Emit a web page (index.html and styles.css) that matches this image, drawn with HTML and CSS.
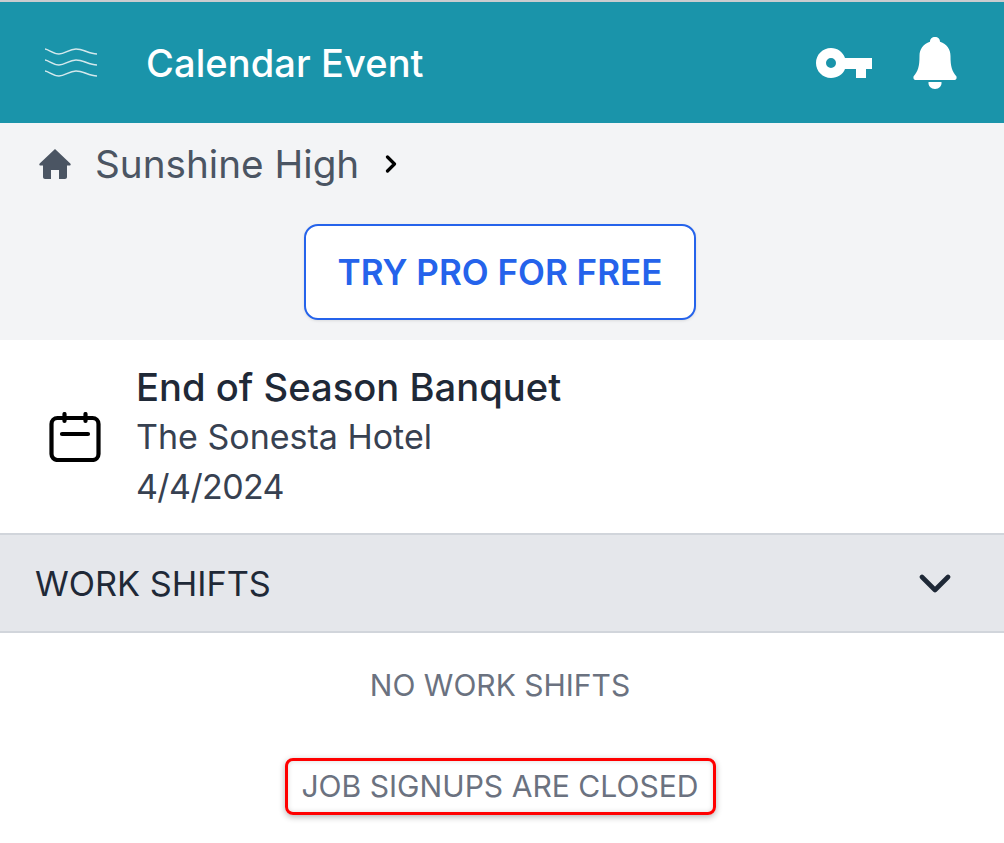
FILE: index.html
```html
<!DOCTYPE html>
<html lang="en">
<head>
<meta charset="utf-8">
<title>Calendar Event</title>
<link rel="stylesheet" href="styles.css">
</head>
<body>
<header class="topbar">
  <svg class="waves" viewBox="0 0 52 30" fill="none" stroke="#d3e8ec" stroke-width="1.600" stroke-linecap="round" aria-hidden="true">
    <path d="M0 1C4 1.500 8 6 14 6S24 1 31 1s13 5 21 5"/>
    <path d="M0 12c4 .5 8 5 14 5s10-5 17-5 13 5 21 5"/>
    <path d="M0 23c4 .5 8 5 14 5s10-5 17-5 13 5 21 5"/>
  </svg>
  <h1 class="title">Calendar Event</h1>
  <svg class="key" viewBox="0 0 56 30" aria-hidden="true">
    <path fill="#fff" fill-rule="evenodd" d="M15 0c6.500 0 12 4 14 10h27v11h-6v9H40v-9H29c-2 5.500-7.500 9-14 9C6.700 30 0 23.300 0 15S6.700 0 15 0zm0 10a5 5 0 1 0 0 10 5 5 0 0 0 0-10z"/>
  </svg>
  <svg class="bell" viewBox="0 0 44 52" aria-hidden="true">
    <path fill="#fff" d="M22 0c3 0 5 2 5 4.800C34 6.800 37.500 12.500 37.500 19c0 11 1.500 15 6 20.500.5 2-.5 3.500-2 3.500H2.500c-1.500 0-2.500-1.500-2-3.500C5 34 6.500 30 6.500 19 6.500 12.500 10 6.800 17 4.800 17 2 19 0 22 0z"/>
    <path fill="#fff" d="M15.500 45h13c.5 4-2.500 7-6.500 7s-7-3-6.500-7z"/>
  </svg>
</header>

<section class="subbar">
  <nav class="crumbs">
    <svg class="home" viewBox="0 0 32 30" aria-hidden="true">
      <path fill="#4b5563" d="M16 0l15.300 14.500c.8.800.3 2-.8 2H28v11.500c0 1.100-.9 2-2 2h-6v-9h-8v9H6c-1.100 0-2-.9-2-2V16.500H1.500c-1.100 0-1.600-1.200-.8-2z"/>
    </svg>
    <span class="crumb-text">Sunshine High</span>
    <svg class="crumb-arrow" viewBox="0 0 12 18" fill="none" stroke="#000" stroke-width="3.200" stroke-linecap="round" stroke-linejoin="round" aria-hidden="true">
      <path d="M2.500 2l7 7-7 7"/>
    </svg>
  </nav>
  <div class="cta-row">
    <button class="cta" type="button">TRY PRO FOR FREE</button>
  </div>
</section>

<section class="event">
  <svg class="cal" viewBox="0 0 52 50" fill="none" stroke="#000" stroke-width="4.200" stroke-linecap="round" stroke-linejoin="round" aria-hidden="true">
    <rect x="2.500" y="6" width="47" height="42" rx="6"/>
    <path d="M15.500 2v7M36.500 2v7M13 22h26"/>
  </svg>
  <div class="event-info">
    <div class="event-name">End of Season Banquet</div>
    <div class="event-line">The Sonesta Hotel</div>
    <div class="event-line event-date">4/4/2024</div>
  </div>
</section>

<section class="shifts-head">
  <span class="shifts-title">WORK SHIFTS</span>
  <svg class="chev" viewBox="0 0 32 20" fill="none" stroke="#1f2937" stroke-width="4.600" stroke-linecap="round" stroke-linejoin="round" aria-hidden="true">
    <path d="M3 3l13 13L29 3"/>
  </svg>
</section>

<section class="shifts-body">
  <p class="empty">NO WORK SHIFTS</p>
  <p class="closed">JOB SIGNUPS ARE CLOSED</p>
</section>
</body>
</html>
```
FILE: styles.css
```css
* { box-sizing: border-box; }
html, body { margin: 0; padding: 0; background: #fff; }
body {
  font-family: Inter, "Liberation Sans", sans-serif;
  border-top: 2px solid #c9cccf;
  height: 843px;
  overflow: hidden;
}
.topbar {
  height: 121px;
  background: #1a94aa;
  display: flex;
  align-items: center;
  padding: 0 47px 0 45px;
}
.waves { width: 52px; height: 30px; flex: none; }
.title {
  margin: 0 0 0 49px;
  font-size: 38px;
  font-weight: 500;
  letter-spacing: .1px;
  color: #fff;
  flex: 1;
}
.key { width: 56px; height: 30px; flex: none; margin-right: 41px; }
.bell { width: 44px; height: 52px; flex: none; }
.subbar { background: #f3f4f6; height: 217px; padding: 21px 0 0 39px; }
.crumbs { display: flex; align-items: center; height: 40px; }
.home { width: 32px; height: 30px; flex: none; }
.crumb-text { margin-left: 24px; font-size: 38.700px; color: #4b5563; }
.crumb-arrow { width: 12px; height: 18px; margin-left: 26px; flex: none; }
.cta-row { display: flex; justify-content: center; padding: 40px 43px 0 0; }
.cta {
  width: 392px;
  height: 96px;
  background: #fff;
  border: 2px solid #2563eb;
  border-radius: 14px;
  box-shadow: 0 1px 3px rgba(0, 0, 0, .1);
  color: #2563eb;
  font-family: inherit;
  font-size: 35px;
  font-weight: 600;
}
.event { height: 193px; display: flex; align-items: center; padding-left: 49px; background: #fff; }
.cal { width: 52px; height: 50px; flex: none; margin-top: 1px; }
.event-info { margin-left: 35px; }
.event-name { font-size: 38.200px; font-weight: 500; line-height: 50px; color: #1f2937; }
.event-line { font-size: 34px; line-height: 50px; color: #374151; }
.event-date { letter-spacing: -.6px; }
.shifts-head {
  height: 100px;
  background: #e5e7eb;
  border-top: 2px solid #d1d5db;
  border-bottom: 2px solid #d1d5db;
  display: flex;
  align-items: center;
  justify-content: space-between;
  padding: 0 53px 0 35px;
}
.shifts-title { font-size: 34.300px; color: #1f2937; }
.chev { width: 32px; height: 20px; flex: none; margin-top: 2px; }
.shifts-body { display: flex; flex-direction: column; align-items: center; padding: 32px 4px 0 0; }
.empty { margin: 0; font-size: 30px; line-height: 40px; color: #6b7280; }
.closed {
  margin: 53px 0 0;
  width: 431px;
  height: 57px;
  padding-bottom: 2px;
  border: 3px solid #f00;
  border-radius: 8px;
  box-shadow: 0 2px 6px rgba(0, 0, 0, .3), inset 0 0 5px rgba(0, 0, 0, .15);
  display: flex;
  align-items: center;
  justify-content: center;
  font-size: 30.100px;
  color: #6b7280;
}
```
